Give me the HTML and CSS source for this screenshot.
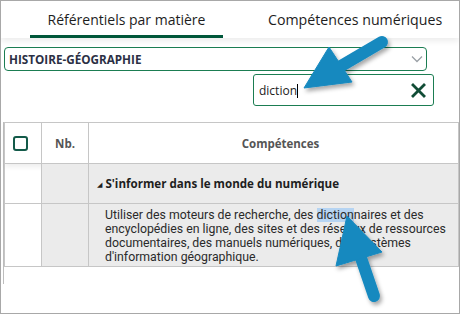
FILE: index.html
```html
<!DOCTYPE html>
<html lang="fr">
<head>
  <meta charset="UTF-8">
  <title>Référentiels par matière</title>
  <link rel="stylesheet" href="styles.css">
</head>
<body>

<div class="frame">
  <nav class="tabs">
    <div class="tab active">Référentiels par matière</div>
    <div class="tab">Compétences numériques</div>
  </nav>

  <div class="filters">
    <div class="select">
      <span>HISTOIRE-GÉOGRAPHIE</span>
      <svg class="chevron" width="12" height="8" viewBox="0 0 12 8"><path d="M1 1.5 L6 6.5 L11 1.5" fill="none" stroke="#9aa0a6" stroke-width="1.3"/></svg>
    </div>
    <div class="search">
      <span class="query">diction<span class="caret"></span></span>
      <svg class="clear" width="15" height="15" viewBox="0 0 15 15"><path d="M2 2 L13 13 M13 2 L2 13" stroke="#114d36" stroke-width="2.8" stroke-linecap="square"/></svg>
    </div>
  </div>

  <div class="table-wrap">
    <table class="grid">
      <thead>
        <tr>
          <th class="c-check"><span class="checkbox"></span></th>
          <th class="c-nb">Nb.</th>
          <th class="c-label">Compétences</th>
        </tr>
      </thead>
      <tbody>
        <tr class="group">
          <td></td>
          <td class="shade"></td>
          <td class="shade"><span class="tri">◢</span>S'informer dans le monde du numérique</td>
        </tr>
        <tr class="item">
          <td></td>
          <td class="shade"></td>
          <td class="shade desc">Utiliser des moteurs de recherche, des <mark>diction</mark>naires et des<br>encyclopédies en ligne, des sites et des réseaux de ressources<br>documentaires, des manuels numériques, des systèmes<br>d'information géographique.</td>
        </tr>
      </tbody>
    </table>
  </div>

  <!-- annotation arrows -->
  <svg class="arrows" width="460" height="314" viewBox="0 0 460 314">
    <defs>
      <filter id="shadow" x="-20%" y="-20%" width="140%" height="140%">
        <feDropShadow dx="2" dy="3" stdDeviation="2" flood-color="#000" flood-opacity="0.35"/>
      </filter>
    </defs>
    <g fill="#1589bf" stroke="#1589bf" filter="url(#shadow)">
      <line x1="382" y1="42" x2="336" y2="69" stroke-width="12" stroke-linecap="round"/>
      <polygon points="304,88 329,47 352,82" stroke-width="1" stroke-linejoin="round"/>
      <line x1="374" y1="296" x2="360" y2="255" stroke-width="12" stroke-linecap="round"/>
      <polygon points="347,216 336,266 382,252" stroke-width="1" stroke-linejoin="round"/>
    </g>
  </svg>
</div>

</body>
</html>
```

FILE: styles.css
```css
body {
  margin: 0;
  font-family: "Open Sans", "DejaVu Sans", sans-serif;
  color: #222;
}

.frame {
  position: relative;
  width: 460px;
  height: 314px;
  box-sizing: border-box;
  border: 1px solid #a8a8a8;
  overflow: hidden;
  background: #fff;
}

.tabs {
  display: flex;
  height: 37px;
  padding-left: 29px;
  box-shadow: 0 3px 6px rgba(0, 0, 0, 0.08);
}

.tab {
  font-size: 14px;
  padding-top: 9px;
  text-align: center;
  color: #1d1d1d;
}

.tab.active {
  width: 193px;
  border-bottom: 3px solid #00573a;
}

.tab + .tab {
  margin-left: 45px;
  font-size: 14.2px;
}

.filters {
  padding: 9px 0 0 3px;
}

.select {
  width: 423px;
  height: 24px;
  box-sizing: border-box;
  border: 1px solid #1b7d52;
  border-radius: 4px;
  display: flex;
  align-items: center;
  justify-content: space-between;
  padding: 0 3px 0 4px;
  font-size: 11.7px;
  font-weight: bold;
  color: #2b2f44;
}

.search {
  width: 181px;
  height: 32px;
  box-sizing: border-box;
  margin: 3px 0 0 249px;
  border: 1px solid #1b7d52;
  border-radius: 3px;
  display: flex;
  align-items: center;
  justify-content: space-between;
  padding: 0 7px 0 5px;
  font-size: 12px;
}

.caret {
  display: inline-block;
  width: 1px;
  height: 14px;
  background: #000;
  vertical-align: -3px;
}

.table-wrap {
  margin: 16px 0 0 2px;
  height: 162px;
  border-left: 1px solid #bdbdbd;
}

.grid {
  width: 100%;
  border-collapse: collapse;
  font-size: 11.5px;
}

.grid th,
.grid td {
  border: 1px solid #c6c6c6;
  padding: 0;
}

.grid th {
  height: 40px;
  font-weight: bold;
  color: #555;
}

.c-check {
  width: 36px;
}

.c-nb {
  width: 46px;
}

.c-label {
  padding-left: 14px !important;
}

.checkbox {
  display: block;
  width: 11px;
  height: 11px;
  margin: 0 0 0 8px;
  border: 2px solid #135a49;
  border-radius: 3px;
}

.shade {
  background: #ebebeb;
}

thead tr {
  box-shadow: 0 3px 5px rgba(0, 0, 0, 0.07);
}

.group td {
  height: 39px;
  font-weight: bold;
  font-size: 11.6px;
  color: #1e1e1e;
  padding-left: 8px;
}

.group td:first-child,
.group td:nth-child(2) {
  padding-left: 0;
}

.tri {
  font-size: 7px;
  margin-right: 3px;
  vertical-align: 1px;
}

.item td {
  height: 61px;
}

.desc {
  padding: 1px 0 0 16px !important;
  font-family: Roboto, "Open Sans", sans-serif;
  font-size: 12.3px;
  line-height: 14px;
  color: #2a2a2a;
}

mark {
  background: #b6d4f2;
  color: inherit;
}

.arrows {
  position: absolute;
  left: -1px;
  top: -1px;
}
```
